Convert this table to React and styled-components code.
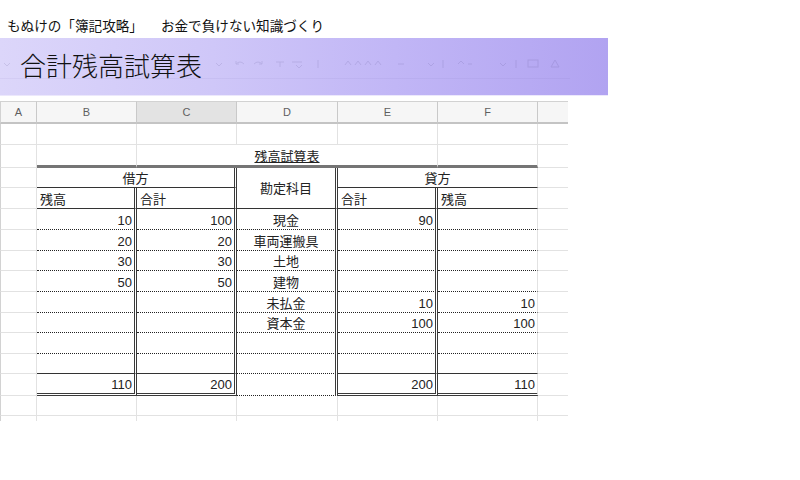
import React from "react";
import styled, { createGlobalStyle, css } from "styled-components";

const Global = createGlobalStyle`
  html, body { margin: 0; padding: 0; background: #fff; }
  body { font-family: "Liberation Sans", "Noto Sans CJK JP", sans-serif; }
`;

const Page = styled.div`
  width: 800px;
  height: 480px;
  overflow: hidden;
  display: flex;
  flex-direction: column;
  align-items: flex-start;
`;

const TopLine = styled.div`
  box-sizing: border-box;
  height: 38px;
  padding: 17px 0 0 7px;
  font-family: "Liberation Serif", "Noto Sans CJK JP", serif;
  font-size: 13.6px;
  line-height: 20px;
  color: #111;
  display: flex;
  gap: 18px;
  white-space: nowrap;
`;

const Banner = styled.div`
  position: relative;
  box-sizing: border-box;
  width: 608px;
  height: 58px;
  padding: 0 0 4px 20px;
  display: flex;
  align-items: center;
  background: linear-gradient(90deg, #dcd6fa 0%, #cfc7f8 35%, #c1b6f6 65%, #b1a3f1 100%);
  border-bottom: 1px solid #ece8fc;
`;

const BannerTitle = styled.h1`
  margin: 0;
  font-family: "Noto Sans CJK JP", sans-serif;
  font-weight: 300;
  font-size: 26px;
  line-height: 32px;
  color: #111;
  letter-spacing: 0;
  position: relative;
  z-index: 1;
`;

const Ghost = styled.svg`
  position: absolute;
  left: 0;
  top: 0;
  opacity: 0.12;
`;

const Sheet = styled.div`
  margin-top: 5px;
  display: grid;
  grid-template-columns: 37px 100px 100px 101px 100px 100px 30px;
  grid-template-rows: 23px 21px 23px 20px 21px 21px 21px 20px 21px 21px 20px 21px 20px 22px 20px 5px;
  font-size: 13px;
  color: #222;
`;

const Head = styled.div`
  box-sizing: border-box;
  border-top: 1px solid #d2d2d2;
  border-bottom: 2px solid #c4c4c4;
  border-right: ${(p) => (p.$last ? "none" : "1px solid #c9c9c9")};
  border-left: ${(p) => (p.$first ? "1px solid #d2d2d2" : "none")};
  background: ${(p) => (p.$sel ? "#e3e3e3" : "#f6f6f6")};
  color: #5f5f5f;
  font-size: 11px;
  display: flex;
  align-items: center;
  justify-content: center;
  padding-bottom: 1px;
`;

const edge = {
  grid: "1px solid #e2e2e2",
  none: "none",
  thick: "3px solid #757575",
  solid: "1px solid #333",
  dotted: "1px dotted #222",
  double: "3px double #3a3a3a",
};

const Cell = styled.div`
  box-sizing: border-box;
  min-width: 0;
  overflow: hidden;
  white-space: nowrap;
  display: flex;
  align-items: ${(p) => (p.$mid ? "center" : "flex-end")};
  justify-content: ${(p) =>
    p.$align === "right" ? "flex-end" : p.$align === "center" ? "center" : "flex-start"};
  padding: 0 ${(p) => (p.$align === "right" ? "2px" : "3px")} ${(p) => (p.$mid ? "0" : "1px")} 3px;
  line-height: 15px;
  border-bottom: ${(p) => edge[p.$b || "grid"]};
  border-right: ${(p) => edge[p.$r || "grid"]};
  border-left: ${(p) => (p.$first ? "1px solid #d2d2d2" : "none")};
  ${(p) => p.$cs && css`grid-column: span ${p.$cs};`}
  ${(p) => p.$rs && css`grid-row: span ${p.$rs};`}
`;

const Underlined = styled.span`
  text-decoration: underline;
  text-underline-offset: 1px;
`;

const names = ["現金", "車両運搬具", "土地", "建物", "未払金", "資本金", "", ""];
const colB = [10, 20, 30, 50, "", "", "", ""];
const colC = [100, 20, 30, 50, "", "", "", ""];
const colE = [90, "", "", "", 10, 100, "", ""];
const colF = ["", "", "", "", 10, 100, "", ""];

function GhostToolbar() {
  return (
    <Ghost width="608" height="58" viewBox="0 0 608 58">
      <g stroke="#3a3470" strokeWidth="1" fill="none">
        <path d="M4 25 l3 3 3-3" />
        <path d="M216 25 l3 3 3-3" />
        <path d="M236 26 q4 -4 8 0 M236 26 l0 -3 M236 26 l3 0" />
        <path d="M262 26 q-4 -4 -8 0 M262 26 l0 -3 M262 26 l-3 0" />
        <path d="M276 24 h8 M280 24 v5" />
        <path d="M292 24 h10 M296 27 l3 3 3-3" />
        <path d="M318 22 v8" />
        <path d="M345 27 l3 -4 3 4 M355 27 l3 -4 3 4 M365 27 l3 -4 3 4 M375 27 l3 -4 3 4" />
        <path d="M398 26 h6" />
        <path d="M428 25 l3 3 3-3" />
        <path d="M443 22 v8" />
        <path d="M458 26 l3 -3 3 3 M468 26 h4" />
        <path d="M500 25 l3 3 3-3" />
        <path d="M516 22 v8" />
        <rect x="528" y="22" width="10" height="7" />
        <path d="M555 22 l-4 7 h8 z" />
      </g>
      <line x1="0" y1="40.5" x2="570" y2="40.5" stroke="#5d55a0" strokeWidth="1" opacity="0.5" />
    </Ghost>
  );
}

export default function App() {
  const rows = [];
  for (let i = 0; i < 8; i++) {
    const isLast = i === 7;
    const b = isLast ? "solid" : "dotted";
    rows.push(
      <React.Fragment key={"r" + i}>
        <Cell $first />
        <Cell $align="right" $b={b} $r="double">{colB[i]}</Cell>
        <Cell $align="right" $b={b} $r="double">{colC[i]}</Cell>
        <Cell $align="center" $b="dotted" $r="double">{names[i]}</Cell>
        <Cell $align="right" $b={b} $r="double">{colE[i]}</Cell>
        <Cell $align="right" $b={b}>{colF[i]}</Cell>
        <Cell $r="none" />
      </React.Fragment>
    );
  }

  return (
    <Page>
      <Global />
      <TopLine>
        <span>もぬけの「簿記攻略」</span>
        <span>お金で負けない知識づくり</span>
      </TopLine>
      <Banner>
        <GhostToolbar />
        <BannerTitle>合計残高試算表</BannerTitle>
      </Banner>
      <Sheet>
        <Head $first>A</Head>
        <Head>B</Head>
        <Head $sel>C</Head>
        <Head>D</Head>
        <Head>E</Head>
        <Head>F</Head>
        <Head $last />

        <Cell $first />
        <Cell />
        <Cell />
        <Cell />
        <Cell />
        <Cell />
        <Cell $r="none" />

        <Cell $first />
        <Cell $b="thick" />
        <Cell $cs={3} $align="center" $b="thick">
          <Underlined>残高試算表</Underlined>
        </Cell>
        <Cell $b="thick" />
        <Cell $r="none" />

        <Cell $first />
        <Cell $cs={2} $align="center" $b="solid" $r="double">借方</Cell>
        <Cell $rs={2} $mid $align="center" $b="solid" $r="double">勘定科目</Cell>
        <Cell $cs={2} $align="center" $b="solid">貸方</Cell>
        <Cell $r="none" />

        <Cell $first />
        <Cell $b="solid" $r="double">残高</Cell>
        <Cell $b="solid" $r="double">合計</Cell>
        <Cell $b="solid" $r="double">合計</Cell>
        <Cell $b="solid">残高</Cell>
        <Cell $r="none" />

        {rows}

        <Cell $first />
        <Cell $align="right" $b="double" $r="double">110</Cell>
        <Cell $align="right" $b="double" $r="double">200</Cell>
        <Cell $b="dotted" $r="double" />
        <Cell $align="right" $b="double" $r="double">200</Cell>
        <Cell $align="right" $b="double">110</Cell>
        <Cell $r="none" />

        <Cell $first />
        <Cell />
        <Cell />
        <Cell />
        <Cell />
        <Cell />
        <Cell $r="none" />

        <Cell $first $b="none" />
        <Cell $b="none" />
        <Cell $b="none" />
        <Cell $b="none" />
        <Cell $b="none" />
        <Cell $b="none" />
        <Cell $r="none" $b="none" />
      </Sheet>
    </Page>
  );
}
